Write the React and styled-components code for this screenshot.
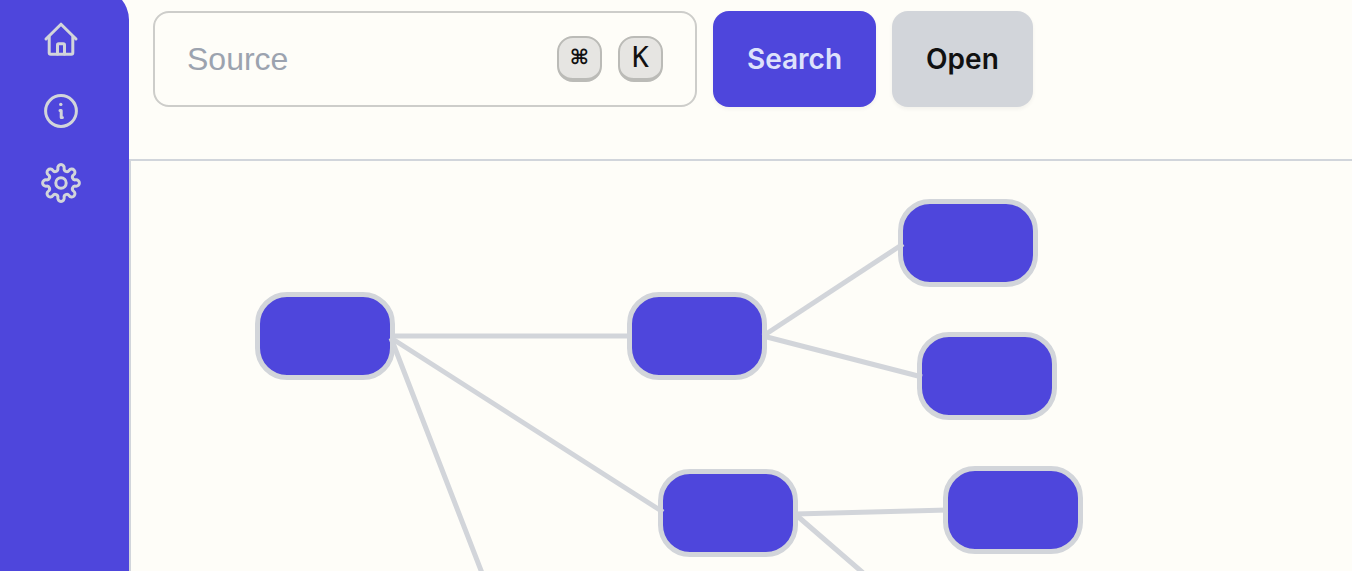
import React from "react";
import styled, { createGlobalStyle } from "styled-components";

const GlobalStyle = createGlobalStyle`
  *, *::before, *::after { box-sizing: border-box; }
  body {
    margin: 0;
    background: #fefdf8;
    color: #111111;
    font-family: Inter, "Liberation Sans", sans-serif;
  }
`;

const Page = styled.div`
  display: flex;
  height: 100vh;
  overflow: hidden;
`;

const Sidebar = styled.nav`
  flex: none;
  display: flex;
  flex-direction: column;
  gap: 32px;
  margin-top: -12px;
  padding: 31px 48px 32px 41px;
  border-top-right-radius: 32px;
  background: #4e46dc;
`;

const NavLink = styled.a`
  display: block;
  height: 40px;
  color: #d2d5da;
`;

const Icon = styled.svg`
  display: block;
  width: 40px;
  height: 40px;
  fill: none;
  stroke: currentColor;
  stroke-width: 3;
  stroke-linecap: round;
  stroke-linejoin: round;
`;

const Main = styled.main`
  flex: 1;
  min-width: 0;
  display: flex;
  flex-direction: column;
`;

const Toolbar = styled.form`
  display: flex;
  gap: 16px;
  padding: 11px 24px 52px;
  border-bottom: 2px solid #d1d5db;
`;

const SearchField = styled.label`
  flex: 0 1 544px;
  min-width: 0;
  display: flex;
  align-items: center;
  gap: 16px;
  height: 96px;
  padding: 0 32px;
  border: 2px solid #cdcdca;
  border-radius: 16px;
`;

const SearchInput = styled.input`
  flex: 1;
  min-width: 0;
  padding: 0;
  border: 0;
  outline: 0;
  background: transparent;
  color: #111111;
  font: 400 32px/40px "Liberation Sans", Arial, sans-serif;
  &::placeholder { color: #9ca3af; opacity: 1; }
`;

const Key = styled.kbd`
  flex: none;
  display: flex;
  align-items: center;
  justify-content: center;
  width: 45px;
  height: 46px;
  border: 2px solid #bbbbb7;
  border-bottom-width: 4px;
  border-radius: 16px;
  background: #e6e5e2;
  font: ${(p) => (p.$symbol ? 700 : 400)} 28px/40px "DejaVu Sans Mono", "DejaVu Sans", monospace;
`;

const Button = styled.button`
  flex: none;
  height: 96px;
  padding: 0 34px;
  border: 0;
  border-radius: 16px;
  box-shadow: 0 2px 4px rgba(0, 0, 0, 0.05);
  background: ${(p) => (p.$primary ? "#4e46dc" : "#d2d5da")};
  color: ${(p) => (p.$primary ? "#dde2fb" : "#111111")};
  font: 600 28px/40px Inter, "Liberation Sans", sans-serif;
`;

const Canvas = styled.section`
  position: relative;
  flex: 1;
  min-height: 0;
  overflow: hidden;
  border-left: 2px solid #d1d5db;
`;

const Node = styled.div`
  position: absolute;
  left: ${(p) => p.$x}px;
  top: ${(p) => p.$y}px;
  width: 140px;
  height: 88px;
  border: 5px solid #d2d5da;
  border-radius: 32px;
  background: #4e46dc;
`;

const Edges = styled.svg`
  position: absolute;
  top: 0;
  left: 0;
  width: 100%;
  height: 100%;
  overflow: visible;
  fill: none;
  stroke: #d2d5da;
  stroke-width: 5;
`;

// Eight round teeth joined by smaller concave fillets.
function gearPath() {
  const c = 20, lobe = 15.2, r1 = 3.2, r2 = 2.75, step = Math.PI / 4;
  const half = lobe * Math.sin(step / 2);
  const fillet = lobe * Math.cos(step / 2) + Math.sqrt((r1 + r2) ** 2 - half ** 2);
  const polar = (r, a) => [c + r * Math.cos(a), c + r * Math.sin(a)];
  const touch = (a, side) => {
    const [lx, ly] = polar(lobe, a);
    const [fx, fy] = polar(fillet, a + (side * step) / 2);
    const t = r1 / (r1 + r2);
    return `${(lx + (fx - lx) * t).toFixed(2)} ${(ly + (fy - ly) * t).toFixed(2)}`;
  };
  let d = `M${touch(0, -1)}`;
  for (let i = 0; i < 8; i += 1) {
    d += `A${r1} ${r1} 0 1 1 ${touch(i * step, 1)}`;
    d += `A${r2} ${r2} 0 0 0 ${touch((i + 1) * step, -1)}`;
  }
  return `${d}Z`;
}

const gear = gearPath();

const nodes = [
  [124, 131],
  [496, 131],
  [767, 38],
  [786, 171],
  [527, 308],
  [812, 305],
];

const edges = [
  "M260 175H501",
  "M260 177L532 351",
  "M260 177L351 412L380 487",
  "M632 175L772 83",
  "M632 175L791 216",
  "M664 353L817 349",
  "M664 353L731 411L770 446",
];

export default function App() {
  return (
    <>
      <GlobalStyle />
      <Page>
        <Sidebar aria-label="Main">
          <NavLink href="#home" aria-label="Home">
            <Icon viewBox="0 0 40 40">
              <path d="M5 20L20 5.2L35 20" />
              <path d="M8.2 18V33.7Q8.2 35.2 9.7 35.2H30.3Q31.8 35.2 31.8 33.7V18" />
              <path d="M16.5 35V26Q16.5 24.8 17.7 24.8H22.3Q23.5 24.8 23.5 26V35" />
            </Icon>
          </NavLink>
          <NavLink href="#info" aria-label="Information">
            <Icon viewBox="0 0 40 40">
              <circle cx="20" cy="20" r="15.4" />
              <circle cx="19.8" cy="13.4" r="1.7" fill="currentColor" stroke="none" />
              <path d="M19 19.6H20.2V26.4H21.4" />
            </Icon>
          </NavLink>
          <NavLink href="#settings" aria-label="Settings">
            <Icon viewBox="0 0 40 40">
              <path d={gear} />
              <circle cx="20" cy="20" r="5.2" />
            </Icon>
          </NavLink>
        </Sidebar>
        <Main>
          <Toolbar onSubmit={(e) => e.preventDefault()}>
            <SearchField>
              <SearchInput type="text" placeholder="Source" aria-label="Source" />
              <Key $symbol>⌘</Key>
              <Key>K</Key>
            </SearchField>
            <Button type="submit" $primary>Search</Button>
            <Button type="button">Open</Button>
          </Toolbar>
          <Canvas aria-label="Graph">
            {nodes.map(([x, y]) => (
              <Node key={`${x}-${y}`} $x={x} $y={y} />
            ))}
            <Edges aria-hidden="true">
              {edges.map((d) => (
                <path key={d} d={d} />
              ))}
            </Edges>
          </Canvas>
        </Main>
      </Page>
    </>
  );
}
